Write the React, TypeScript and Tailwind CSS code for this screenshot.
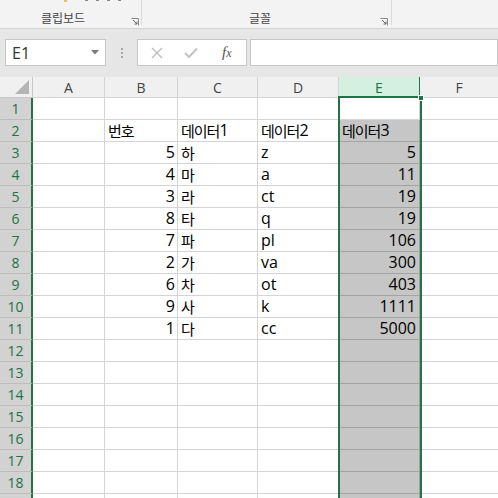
import React from "react";

const FONT = '"Open Sans", "Noto Sans CJK KR", sans-serif';

type Row = { b?: string; c?: string; d?: string; e?: string; bLeft?: boolean; eLeft?: boolean };

const rows: Row[] = [
  {},
  { b: "번호", c: "데이터1", d: "데이터2", e: "데이터3", bLeft: true, eLeft: true },
  { b: "5", c: "하", d: "z", e: "5" },
  { b: "4", c: "마", d: "a", e: "11" },
  { b: "3", c: "라", d: "ct", e: "19" },
  { b: "8", c: "타", d: "q", e: "19" },
  { b: "7", c: "파", d: "pl", e: "106" },
  { b: "2", c: "가", d: "va", e: "300" },
  { b: "6", c: "차", d: "ot", e: "403" },
  { b: "9", c: "사", d: "k", e: "1111" },
  { b: "1", c: "다", d: "cc", e: "5000" },
  {}, {}, {}, {}, {}, {}, {}, {},
];

function Txt({ s }: { s?: string }) {
  if (!s) return null;
  const parts = s.match(/[\uAC00-\uD7A3]+|[^\uAC00-\uD7A3]+/g) || [];
  return (
    <>
      {parts.map((p, i) =>
        /[\uAC00-\uD7A3]/.test(p) ? (
          <span key={i} className="text-[15px] tracking-[-1px]" style={{ fontFamily: '"Noto Sans CJK KR", sans-serif' }}>
            {p}
          </span>
        ) : (
          <span key={i}>{p}</span>
        )
      )}
    </>
  );
}

function Launcher() {
  return (
    <svg width="8" height="8" viewBox="0 0 8 8" className="block">
      <path d="M0.5 0.5 H7.5 V7.5" fill="none" stroke="#8a8a8a" strokeWidth="1" />
      <path d="M2 2 L6 6 M6 3.5 V6 H3.5" fill="none" stroke="#666" strokeWidth="1" />
    </svg>
  );
}

export default function App() {
  return (
    <div className="w-[498px] h-[498px] overflow-hidden bg-white relative" style={{ fontFamily: FONT }}>
      {/* Ribbon */}
      <div className="h-[29px] bg-[#f3f3f3] border-b border-[#d5d5d5] flex relative">
        <div className="w-[142px] border-r border-[#dadada] h-[25px] relative">
          <div className="absolute left-[64px] top-0 w-[3px] h-[2px] bg-[#e8c060]" />
          <div className="absolute left-[85px] top-0 w-[40px] h-[1px] flex gap-[8px]">
            <div className="w-[3px] h-[1px] bg-[#888]" />
            <div className="w-[3px] h-[1px] bg-[#888]" />
            <div className="w-[3px] h-[1px] bg-[#888]" />
            <div className="w-[3px] h-[1px] bg-[#888]" />
          </div>
          <div
            className="absolute left-0 w-[126px] top-[10px] text-center text-[12px] leading-[16px] text-[#444]"
            style={{ fontFamily: '"Noto Sans CJK KR", sans-serif' }}
          >
            클립보드
          </div>
          <div className="absolute left-[131px] top-[18px]"><Launcher /></div>
        </div>
        <div className="w-[250px] border-r border-[#dadada] h-[25px] relative">
          <div
            className="absolute left-0 w-[236px] top-[10px] text-center text-[12px] leading-[16px] text-[#444]"
            style={{ fontFamily: '"Noto Sans CJK KR", sans-serif' }}
          >
            글꼴
          </div>
          <div className="absolute left-[238px] top-[18px]"><Launcher /></div>
        </div>
      </div>

      {/* Formula bar */}
      <div className="h-[48px] bg-[#e6e6e6] flex items-start pt-[10px]">
        <div className="ml-[5px] w-[101px] h-[27px] bg-white border border-[#c6c6c6] flex items-center justify-between pl-[6px] pr-[6px]">
          <span className="text-[16px] text-[#333]">E1</span>
          <svg width="8" height="5" viewBox="0 0 8 5"><path d="M0 0 H8 L4 4.5 Z" fill="#7a7a7a" /></svg>
        </div>
        <div className="w-[31px] h-[27px] flex flex-col items-center justify-center gap-[2px]">
          <div className="w-[2px] h-[2px] bg-[#a8a8a8]" />
          <div className="w-[2px] h-[2px] bg-[#a8a8a8]" />
          <div className="w-[2px] h-[2px] bg-[#a8a8a8]" />
        </div>
        <div className="w-[110px] h-[27px] bg-white border border-[#c6c6c6] flex items-center">
          <svg width="12" height="12" viewBox="0 0 12 12" className="ml-[13px]">
            <path d="M1 1 L11 11 M11 1 L1 11" stroke="#bdbdbd" strokeWidth="1.4" />
          </svg>
          <svg width="14" height="12" viewBox="0 0 14 12" className="ml-[21px]">
            <path d="M1 6 L5 10 L13 1.5" stroke="#c4c4c4" strokeWidth="2" fill="none" />
          </svg>
          <span className="ml-[24px] text-[15px] italic text-[#555]" style={{ fontFamily: '"Liberation Serif", serif' }}>
            f<span className="text-[12px]">x</span>
          </span>
        </div>
        <div className="ml-[3px] flex-1 h-[27px] bg-white border border-[#c6c6c6]" />
      </div>

      {/* Sheet */}
      <div className="relative">
        <div className="grid grid-cols-[33px_72px_73px_80px_81px_81px_1fr] text-[16px] text-black">
          {/* header row */}
          <div className="h-[21px] bg-[#f0f0f0] border-r border-b border-[#c8c8c8] relative">
            <div
              className="absolute right-[3px] bottom-[3px] w-[14px] h-[14px] bg-[#b4b4b4]"
              style={{ clipPath: "polygon(100% 0, 100% 100%, 0 100%)" }}
            />
          </div>
          {["A", "B", "C", "D"].map((c) => (
            <div key={c} className="h-[21px] bg-[#f0f0f0] border-r border-b border-[#d4d4d4] flex items-center justify-center text-[14px] text-[#444]">
              {c}
            </div>
          ))}
          <div className="h-[21px] bg-[#d3f0e0] border-r border-b border-[#217346] flex items-center justify-center text-[14px] text-[#217346]">
            E
          </div>
          <div className="h-[21px] bg-[#f0f0f0] border-b border-[#d4d4d4] flex items-center justify-center text-[14px] text-[#444]">
            F
          </div>

          {rows.map((r, i) => (
            <React.Fragment key={i}>
              <div className="h-[22px] bg-[#d2d2d2] border-b border-[#bdbdbd] border-r-2 border-r-[#217346] flex items-center justify-center text-[14px] text-[#217346]">
                {i < 18 ? i + 1 : ""}
              </div>
              <div className="h-[22px] border-r border-b border-[#d4d4d4]" />
              <div className={`h-[22px] border-r border-b border-[#d4d4d4] flex items-end pb-[1px] leading-[19px] ${r.bLeft ? "justify-start pl-[3px]" : "justify-end pr-[2px]"}`}>
                <Txt s={r.b} />
              </div>
              <div className="h-[22px] border-r border-b border-[#d4d4d4] flex items-end pb-[1px] leading-[19px] pl-[3px]"><Txt s={r.c} /></div>
              <div className="h-[22px] border-r border-b border-[#d4d4d4] flex items-end pb-[1px] leading-[19px] pl-[3px]"><Txt s={r.d} /></div>
              <div
                className={`h-[22px] border-r border-b flex items-end pb-[1px] leading-[19px] ${
                  i === 0 ? "bg-white border-[#d4d4d4]" : "bg-[#c6c6c6] border-[#a3a3a3]"
                } ${r.eLeft ? "justify-start pl-[3px]" : "justify-end pr-[3px]"}`}
              >
                <Txt s={r.e} />
              </div>
              <div className="h-[22px] border-b border-[#d4d4d4]" />
            </React.Fragment>
          ))}
        </div>

        {/* selection border */}
        <div className="absolute left-[338px] top-[19px] w-[84px] h-[480px] border-2 border-[#217346] pointer-events-none" />
        <div className="absolute left-[418px] top-[18px] w-[6px] h-[6px] bg-[#217346] border border-white pointer-events-none" />
      </div>
    </div>
  );
}
